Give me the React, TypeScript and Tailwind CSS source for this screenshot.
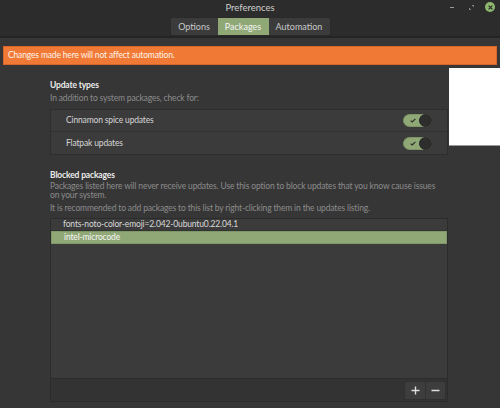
import React from "react";

const font = { fontFamily: 'Lato, "Noto Sans", sans-serif' };

function Toggle() {
  return (
    <div className="relative w-[29px] h-[13px] rounded-full bg-[#8fa876] border border-[#7d9566]">
      <svg className="absolute left-[6px] top-[3px]" width="6" height="5" viewBox="0 0 6 5">
        <path d="M0.6 2.6 L2.2 4 L5.4 0.8" stroke="#2b2b2b" strokeWidth="1.1" fill="none" />
      </svg>
      <div className="absolute right-[-1px] top-[-1px] w-[13px] h-[13px] rounded-full bg-[#2e2e2e] border border-[#262626]" />
    </div>
  );
}

export default function App() {
  return (
    <div
      className="relative w-[500px] h-[408px] bg-[#363636] overflow-hidden flex flex-col text-[#dcdcdc] tracking-[-0.15px]"
      style={font}
    >
      {/* header */}
      <div className="relative h-[38px] bg-[#2c2c2c] border-b-2 border-[#242424] flex flex-col items-center shrink-0">
        <div className="text-[9.5px] leading-[12px] text-[#cfcfcf] h-[16px] flex items-center tracking-normal">
          Preferences
        </div>
        <div className="flex h-[19px] mt-[1px] rounded-[2px] overflow-hidden bg-[#3b3b3b] border border-[#2a2a2a] text-[9px] tracking-normal">
          <div className="w-[47px] flex items-center justify-center text-[#c8c8c8]">Options</div>
          <div className="w-[51px] flex items-center justify-center bg-[#8fa876] text-[#f4f4f4]">Packages</div>
          <div className="w-[61px] flex items-center justify-center text-[#c8c8c8]">Automation</div>
        </div>
        <div className="absolute right-[5px] top-[1px] flex items-center h-[12px]">
          <div className="w-[4px] h-[1px] bg-[#9a9a9a] mr-[15px]" />
          <svg width="5" height="5" viewBox="0 0 5 5" className="mr-[11px]">
            <path d="M0.5 4.5 L1.8 4.5 M0.5 4.5 L0.5 3.2 M4.5 0.5 L3.2 0.5 M4.5 0.5 L4.5 1.8" stroke="#9a9a9a" strokeWidth="1" />
          </svg>
          <div className="w-[10px] h-[10px] rounded-full bg-[#8fb86f] flex items-center justify-center">
            <svg width="5" height="5" viewBox="0 0 5 5">
              <path d="M0.6 0.6 L4.4 4.4 M4.4 0.6 L0.6 4.4" stroke="#2b2b2b" strokeWidth="1.2" />
            </svg>
          </div>
        </div>
      </div>

      {/* banner */}
      <div className="mt-[8px] mx-[3px] h-[19px] bg-[#f07a35] border border-[#d8652a] flex items-center px-[4px] text-[8.5px] text-[#fff3ea] shrink-0">
        Changes made here will not affect automation.
      </div>

      {/* content */}
      <div className="flex flex-col pl-[50px] w-[448px]">
        <div className="mt-[14px] text-[8.5px] font-bold text-[#ececec] leading-[12px]">Update types</div>
        <div className="mt-[1px] text-[8.5px] text-[#8c8c8c] leading-[12px]">
          In addition to system packages, check for:
        </div>
        <div className="mt-[5px] bg-[#3b3b3b] border border-[#2e2e2e] flex flex-col">
          <div className="h-[22px] flex items-center justify-between pl-[15px] pr-[15px] border-b border-[#313131]">
            <span className="text-[8.5px] text-[#d6d6d6]">Cinnamon spice updates</span>
            <Toggle />
          </div>
          <div className="h-[22px] flex items-center justify-between pl-[15px] pr-[15px]">
            <span className="text-[8.5px] text-[#d6d6d6]">Flatpak updates</span>
            <Toggle />
          </div>
        </div>

        <div className="mt-[14px] text-[8.5px] font-bold text-[#ececec] leading-[12px]">Blocked packages</div>
        <div className="mt-[1px] text-[8.5px] text-[#8c8c8c] leading-[9px] pr-[4px]">
          Packages listed here will never receive updates. Use this option to block updates that you know cause issues on your system.
        </div>
        <div className="mt-[2px] text-[8.5px] text-[#8c8c8c] leading-[12px]">
          It is recommended to add packages to this list by right-clicking them in the updates listing.
        </div>

        <div className="mt-[4px] h-[184px] bg-[#3b3b3b] border border-[#2c2c2c] flex flex-col">
          <div className="flex-1 flex flex-col">
            <div className="h-[12px] flex items-center pl-[12px] text-[8.5px] text-[#d8d8d8] border-b border-[#333333]">
              fonts-noto-color-emoji=2.042-0ubuntu0.22.04.1
            </div>
            <div className="h-[13px] flex items-center pl-[12px] text-[8.5px] text-[#f5f5f5] bg-[#8fa876] border border-[#7f9868]">
              intel-microcode
            </div>
          </div>
          <div className="h-[23px] bg-[#333333] border-t border-[#2c2c2c] flex items-center justify-end pr-[1px]">
            <div className="flex h-[19px] rounded-[2px] overflow-hidden bg-[#3d3d3d] border border-[#303030]">
              <div className="w-[21px] flex items-center justify-center border-r border-[#333333]">
                <svg width="9" height="9" viewBox="0 0 9 9">
                  <path d="M4.5 0.5 V8.5 M0.5 4.5 H8.5" stroke="#dedede" strokeWidth="1.4" />
                </svg>
              </div>
              <div className="w-[19px] flex items-center justify-center">
                <svg width="9" height="9" viewBox="0 0 9 9">
                  <path d="M0.5 4.5 H8.5" stroke="#dedede" strokeWidth="1.4" />
                </svg>
              </div>
            </div>
          </div>
        </div>
      </div>

      {/* white overlay artifact */}
      <div className="absolute left-[449px] top-[68px] w-[51px] h-[78px] bg-white border-b border-[#9a9a9a]" />
    </div>
  );
}
